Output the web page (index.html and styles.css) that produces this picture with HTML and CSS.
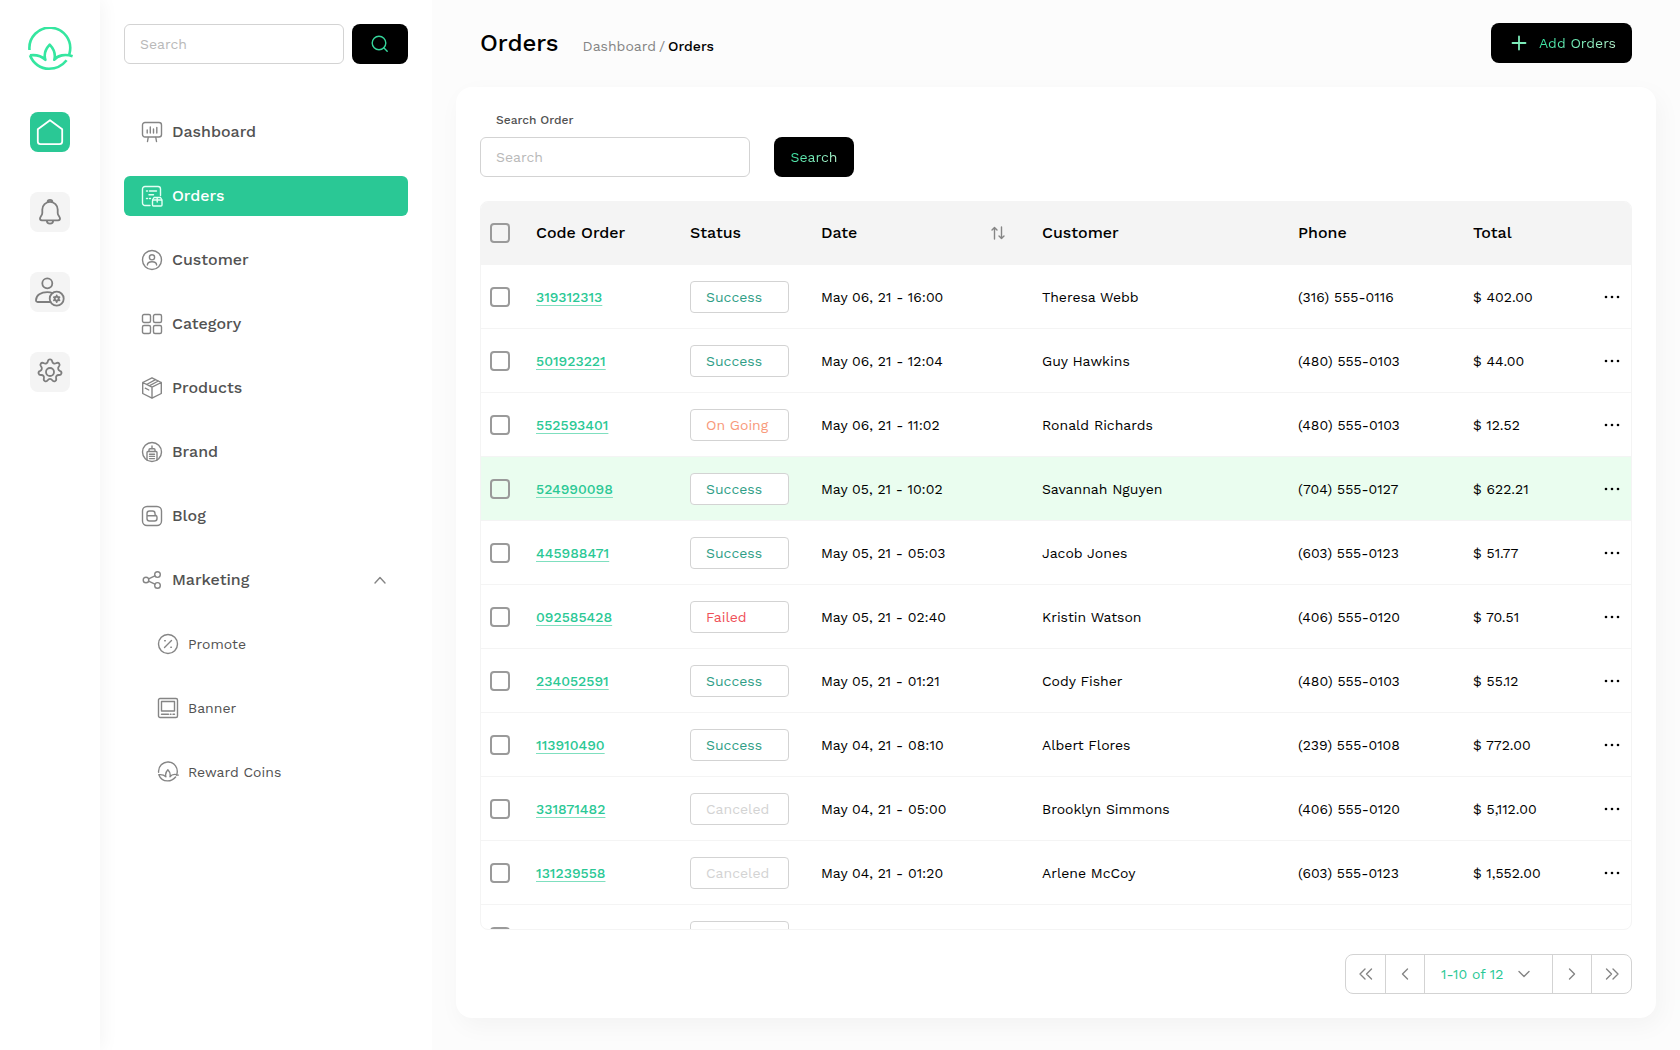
FILE: index.html
```
<!DOCTYPE html>
<html lang="en">
<head>
    <meta charset="UTF-8">
    <meta name="viewport" content="width=device-width, initial-scale=1.0">
    <title>Orders</title>
    <link rel="stylesheet" href="styles.css">
</head>
<body>
    <!-- Shared icons -->
    <svg class="defs" aria-hidden="true">
        <symbol id="leaf" viewBox="-2 0 48 45">
            <path d="M1.5 23A20.4 20.4 0 1 1 41.6 26L41 29.5M2 28.3C8 27.6 13.5 29 17.4 32.8C15.4 26.5 18 21.5 21.7 17.6C25.4 21.5 28 26.5 26.3 32.8C29.5 28.4 37 26.6 44.6 29.3M2 28.3C5 36.5 12.5 41.8 21 41.8C28.5 41.8 34 39 38.6 33.3"/>
        </symbol>
        <symbol id="dots" viewBox="0 0 16 4">
            <circle cx="2" cy="2" r="1.3"/><circle cx="8" cy="2" r="1.3"/><circle cx="14" cy="2" r="1.3"/>
        </symbol>
    </svg>

    <div class="app">
        <nav class="rail" aria-label="Shortcuts">
            <a href="#" class="logo" aria-label="Home page"><svg width="48" height="45"><use href="#leaf"/></svg></a>
            <a href="#" class="rail-button active" aria-label="Home">
                <svg width="28" height="28" viewBox="0 0 28 28"><path d="M1.8 11.2 14 2.200l12.200 9v12.300a2.700 2.700 0 0 1-2.700 2.700h-19a2.700 2.700 0 0 1-2.700-2.700z"/></svg>
            </a>
            <a href="#" class="rail-button" aria-label="Notifications">
                <svg width="28" height="28" viewBox="0 0 28 28"><path d="M11.6 4.300a2.400 2.400 0 0 1 4.800 0M6.300 11.500a7.700 7.700 0 0 1 15.400 0v3.500c0 2.600 2.300 3.300 2.300 5.600 0 1-.7 1.700-1.800 1.700H5.800c-1.100 0-1.800-.7-1.800-1.700C4 18.300 6.300 17.600 6.300 15zM10.800 22.500a3.200 3.200 0 0 0 6.400 0"/></svg>
            </a>
            <a href="#" class="rail-button" aria-label="Accounts">
                <svg width="30" height="30" viewBox="0 0 30 30"><circle cx="12.300" cy="6.300" r="5"/><path d="M15.600 25H2.600C1.500 25 1 24.300 1 23.200c0-5 5-8 11.300-8 2 0 3.800.3 5.300.8"/><circle cx="21.700" cy="21.700" r="7"/><circle cx="21.700" cy="21.700" r="2"/><path d="M21.700 18.500v1M21.700 24v1M18.900 20.100l.9.500M23.600 22.800l.9.500M18.900 23.300l.9-.5M23.600 20.600l.9-.5"/></svg>
            </a>
            <a href="#" class="rail-button" aria-label="Settings">
                <svg width="28" height="28" viewBox="0 0 28 28"><circle cx="14" cy="14" r="4"/><path d="M11.800 3.500C12 2 12.800 1.300 14 1.300s2 .7 2.200 2.200c.3 1.800 2.200 2.700 3.800 1.800 1.400-.8 2.500-.6 3.200.3s.6 2-.4 3.100c-1.200 1.400-.7 3.400 1 4.100 1.400.5 1.900 1.500 1.600 2.600s-1.200 1.700-2.600 1.600c-1.900-.1-3.200 1.500-2.700 3.300.4 1.400 0 2.400-1.100 2.900s-2.100.1-2.900-1.100c-1-1.600-3.200-1.600-4.200 0-.8 1.200-1.800 1.600-2.900 1.100s-1.500-1.500-1.100-2.900c.5-1.800-.8-3.400-2.700-3.300-1.400.1-2.300-.5-2.600-1.600s.2-2.100 1.600-2.600c1.700-.7 2.200-2.700 1-4.100-1-1.100-1.100-2.200-.4-3.100s1.800-1.100 3.200-.3c1.600.9 3.500 0 3.800-1.800z"/></svg>
            </a>
        </nav>

        <aside class="sidebar">
            <form class="side-search">
                <input type="search" class="field" placeholder="Search" aria-label="Search">
                <button type="button" class="button" aria-label="Search">
                    <svg class="search-icon" width="18" height="18" viewBox="0 0 18 18"><circle cx="8" cy="8" r="6.800"/><path d="m12.800 12.800 3.400 3.400"/></svg>
                </button>
            </form>

            <nav class="menu" aria-label="Main menu">
                <a href="#" class="menu-item">
                    <svg viewBox="0 0 22 22"><rect x="1.500" y="1.500" width="19" height="14.500" rx="2.500"/><path d="M6.200 9v3M9.300 6v6M12.500 8v4M15.800 6.500V12M7.200 16.500 6.500 20.500M14.800 16.500l.7 4"/></svg>
                    Dashboard
                </a>
                <a href="#" class="menu-item active">
                    <svg viewBox="0 0 22 22"><path d="M9 20.500H4A2.500 2.500 0 0 1 1.500 18V4A2.500 2.500 0 0 1 4 1.500h13A2.500 2.500 0 0 1 19.500 4v6.500M5.500 6h1M8.500 6h7M8 9.700h4.500M5.500 13.500h1M8.500 13.500h1"/><rect x="11.500" y="15" width="9.500" height="6" rx="1"/><path d="m11.500 15 1.500-2.500h6.500L21 15M16.200 12.500V17"/></svg>
                    Orders
                </a>
                <a href="#" class="menu-item">
                    <svg viewBox="0 0 22 22"><circle cx="11" cy="11" r="9.500"/><circle cx="11" cy="8.300" r="2.600"/><path d="M6.400 16c0-2.300 1.800-3.300 4.600-3.300s4.600 1 4.600 3.300"/></svg>
                    Customer
                </a>
                <a href="#" class="menu-item">
                    <svg viewBox="0 0 22 22"><rect x="1.500" y="1.500" width="8" height="8" rx="1.500"/><rect x="12.500" y="1.500" width="8" height="8" rx="1.500"/><rect x="1.500" y="12.500" width="8" height="8" rx="1.500"/><rect x="12.500" y="12.500" width="8" height="8" rx="1.500"/></svg>
                    Category
                </a>
                <a href="#" class="menu-item">
                    <svg viewBox="0 0 22 22"><path d="M11 .8 20.300 5.500v11L11 21.200 1.700 16.500v-11zM1.700 5.500 11 10.200l9.300-4.700M11 10.200v11M5.600 7.500 14.500 2.600M8.200 8.800 17.300 4M4.300 11.200l3.500 1.800"/></svg>
                    Products
                </a>
                <a href="#" class="menu-item">
                    <svg viewBox="0 0 22 22"><circle cx="11" cy="11" r="9.500"/><path d="M6 19v-7.500a1 1 0 0 1 1-1h8a1 1 0 0 1 1 1V19M8 10.500V8.800a1 1 0 0 1 1-1h4a1 1 0 0 1 1 1v1.700M11 5v2.500M8.500 13.200h5M8.500 15.400h5M8.500 17.600h5"/></svg>
                    Brand
                </a>
                <a href="#" class="menu-item">
                    <svg viewBox="0 0 22 22"><rect x="1.500" y="1.500" width="19" height="19" rx="4.500"/><path d="M6 8.500A2.500 2.500 0 0 1 8.500 6h3a2.500 2.500 0 0 1 2.500 2.500v.8c0 .7.500 1 1 1.200.7.300 1 .9 1 1.700v1.300a2.500 2.500 0 0 1-2.500 2.500h-5A2.500 2.500 0 0 1 6 13.500zM6 10.700h9"/></svg>
                    Blog
                </a>
                <a href="#" class="menu-item" aria-expanded="true">
                    <svg viewBox="0 0 22 22"><circle cx="5" cy="11" r="2.800"/><circle cx="16.500" cy="5.600" r="2.800"/><circle cx="16.500" cy="16.400" r="2.800"/><path d="m7.600 9.900 6.300-3.100M7.600 12.100l6.300 3.100"/></svg>
                    Marketing
                    <svg class="chevron" viewBox="0 0 12 12"><path d="m1 9 5-5.500L11 9"/></svg>
                </a>
                <a href="#" class="menu-item sub">
                    <svg viewBox="0 0 22 22"><circle cx="11" cy="11" r="9.500"/><path d="m7.500 14.500 7-7M7.700 7.800h.6M13.800 14.200h.6"/></svg>
                    Promote
                </a>
                <a href="#" class="menu-item sub">
                    <svg viewBox="0 0 22 22"><rect x="1.500" y="1.500" width="19" height="19" rx="1.500"/><rect x="4.500" y="4.500" width="13" height="9.500"/><path d="M4.500 17.200h7M13.300 17.200h.7M16 17.200h1.500"/></svg>
                    Banner
                </a>
                <a href="#" class="menu-item sub">
                    <svg class="leaf-small"><use href="#leaf"/></svg>
                    Reward Coins
                </a>
            </nav>
        </aside>

        <main class="main">
            <header class="topbar">
                <h1>Orders</h1>
                <nav class="breadcrumb" aria-label="Breadcrumb"><a href="#">Dashboard</a><span>/</span><strong>Orders</strong></nav>
                <button type="button" class="button add-button">
                    <svg width="24" height="24" viewBox="0 0 24 24"><path d="M12 5.500v13M5.500 12h13"/></svg>
                    <span class="shine">Add Orders</span>
                </button>
            </header>

            <section class="card">
                <form class="filter">
                    <div class="filter-field">
                        <label for="order-search">Search Order</label>
                        <input type="search" id="order-search" class="field" placeholder="Search">
                    </div>
                    <button type="button" class="button"><span class="shine">Search</span></button>
                </form>

                <div class="table-box">
                    <table>
                        <colgroup>
                            <col class="col-check"><col class="col-code"><col class="col-status"><col class="col-date">
                            <col><col class="col-phone"><col class="col-total"><col class="col-more">
                        </colgroup>
                        <thead>
                            <tr>
                                <th><input type="checkbox" aria-label="Select all orders"></th>
                                <th>Code Order</th>
                                <th>Status</th>
                                <th>
                                    <div class="sortable">Date
                                        <button type="button" class="icon-button" aria-label="Sort by date">
                                            <svg width="14" height="14" viewBox="0 0 14 14"><path d="M3.500 13V1.500M1 4l2.500-2.500L6 4M10.500 1v11.500M8 10l2.500 2.500L13 10"/></svg>
                                        </button>
                                    </div>
                                </th>
                                <th>Customer</th>
                                <th>Phone</th>
                                <th>Total</th>
                                <th></th>
                            </tr>
                        </thead>
                        <tbody>
                            <tr>
                                <td><input type="checkbox" aria-label="Select order 319312313"></td>
                                <td><a href="#">319312313</a></td>
                                <td><span class="status success">Success</span></td>
                                <td>May 06, 21 - 16:00</td>
                                <td>Theresa Webb</td>
                                <td>(316) 555-0116</td>
                                <td>$ 402.00</td>
                                <td><button type="button" class="icon-button more" aria-label="More"><svg width="16" height="4"><use href="#dots"/></svg></button></td>
                            </tr>
                            <tr>
                                <td><input type="checkbox" aria-label="Select order 501923221"></td>
                                <td><a href="#">501923221</a></td>
                                <td><span class="status success">Success</span></td>
                                <td>May 06, 21 - 12:04</td>
                                <td>Guy Hawkins</td>
                                <td>(480) 555-0103</td>
                                <td>$ 44.00</td>
                                <td><button type="button" class="icon-button more" aria-label="More"><svg width="16" height="4"><use href="#dots"/></svg></button></td>
                            </tr>
                            <tr>
                                <td><input type="checkbox" aria-label="Select order 552593401"></td>
                                <td><a href="#">552593401</a></td>
                                <td><span class="status ongoing">On Going</span></td>
                                <td>May 06, 21 - 11:02</td>
                                <td>Ronald Richards</td>
                                <td>(480) 555-0103</td>
                                <td>$ 12.52</td>
                                <td><button type="button" class="icon-button more" aria-label="More"><svg width="16" height="4"><use href="#dots"/></svg></button></td>
                            </tr>
                            <tr class="highlight">
                                <td><input type="checkbox" aria-label="Select order 524990098"></td>
                                <td><a href="#">524990098</a></td>
                                <td><span class="status success">Success</span></td>
                                <td>May 05, 21 - 10:02</td>
                                <td>Savannah Nguyen</td>
                                <td>(704) 555-0127</td>
                                <td>$ 622.21</td>
                                <td><button type="button" class="icon-button more" aria-label="More"><svg width="16" height="4"><use href="#dots"/></svg></button></td>
                            </tr>
                            <tr>
                                <td><input type="checkbox" aria-label="Select order 445988471"></td>
                                <td><a href="#">445988471</a></td>
                                <td><span class="status success">Success</span></td>
                                <td>May 05, 21 - 05:03</td>
                                <td>Jacob Jones</td>
                                <td>(603) 555-0123</td>
                                <td>$ 51.77</td>
                                <td><button type="button" class="icon-button more" aria-label="More"><svg width="16" height="4"><use href="#dots"/></svg></button></td>
                            </tr>
                            <tr>
                                <td><input type="checkbox" aria-label="Select order 092585428"></td>
                                <td><a href="#">092585428</a></td>
                                <td><span class="status failed">Failed</span></td>
                                <td>May 05, 21 - 02:40</td>
                                <td>Kristin Watson</td>
                                <td>(406) 555-0120</td>
                                <td>$ 70.51</td>
                                <td><button type="button" class="icon-button more" aria-label="More"><svg width="16" height="4"><use href="#dots"/></svg></button></td>
                            </tr>
                            <tr>
                                <td><input type="checkbox" aria-label="Select order 234052591"></td>
                                <td><a href="#">234052591</a></td>
                                <td><span class="status success">Success</span></td>
                                <td>May 05, 21 - 01:21</td>
                                <td>Cody Fisher</td>
                                <td>(480) 555-0103</td>
                                <td>$ 55.12</td>
                                <td><button type="button" class="icon-button more" aria-label="More"><svg width="16" height="4"><use href="#dots"/></svg></button></td>
                            </tr>
                            <tr>
                                <td><input type="checkbox" aria-label="Select order 113910490"></td>
                                <td><a href="#">113910490</a></td>
                                <td><span class="status success">Success</span></td>
                                <td>May 04, 21 - 08:10</td>
                                <td>Albert Flores</td>
                                <td>(239) 555-0108</td>
                                <td>$ 772.00</td>
                                <td><button type="button" class="icon-button more" aria-label="More"><svg width="16" height="4"><use href="#dots"/></svg></button></td>
                            </tr>
                            <tr>
                                <td><input type="checkbox" aria-label="Select order 331871482"></td>
                                <td><a href="#">331871482</a></td>
                                <td><span class="status canceled">Canceled</span></td>
                                <td>May 04, 21 - 05:00</td>
                                <td>Brooklyn Simmons</td>
                                <td>(406) 555-0120</td>
                                <td>$ 5,112.00</td>
                                <td><button type="button" class="icon-button more" aria-label="More"><svg width="16" height="4"><use href="#dots"/></svg></button></td>
                            </tr>
                            <tr>
                                <td><input type="checkbox" aria-label="Select order 131239558"></td>
                                <td><a href="#">131239558</a></td>
                                <td><span class="status canceled">Canceled</span></td>
                                <td>May 04, 21 - 01:20</td>
                                <td>Arlene McCoy</td>
                                <td>(603) 555-0123</td>
                                <td>$ 1,552.00</td>
                                <td><button type="button" class="icon-button more" aria-label="More"><svg width="16" height="4"><use href="#dots"/></svg></button></td>
                            </tr>
                            <tr>
                                <td><input type="checkbox" aria-label="Select order"></td>
                                <td></td>
                                <td><span class="status"></span></td>
                                <td></td>
                                <td></td>
                                <td></td>
                                <td></td>
                                <td></td>
                            </tr>
                        </tbody>
                    </table>
                </div>

                <div class="pagination">
                    <button type="button" aria-label="First page"><svg width="14" height="12" viewBox="0 0 14 12"><path d="M6 1 1 6l5 5M12.500 1l-5 5 5 5"/></svg></button>
                    <button type="button" aria-label="Previous page"><svg width="14" height="12" viewBox="0 0 14 12"><path d="M9.500 1l-5 5 5 5"/></svg></button>
                    <div class="page-range">
                        <select aria-label="Page">
                            <option>1-10 of 12</option>
                        </select>
                        <svg width="12" height="12" viewBox="0 0 12 12"><path d="m1 3.500 5 5 5-5"/></svg>
                    </div>
                    <button type="button" aria-label="Next page"><svg width="14" height="12" viewBox="0 0 14 12"><path d="m4.500 1 5 5-5 5"/></svg></button>
                    <button type="button" aria-label="Last page"><svg width="14" height="12" viewBox="0 0 14 12"><path d="m1.500 1 5 5-5 5M8 1l5 5-5 5"/></svg></button>
                </div>
            </section>
        </main>
    </div>
</body>
</html>
```
FILE: styles.css
```
* {
    box-sizing: border-box;
}
body {
    margin: 0;
    font-family: "Work Sans", Inter, sans-serif;
    font-size: 14px;
    line-height: 20px;
    color: #000;
    background: #fcfcfc;
}
a {
    color: inherit;
    text-decoration: none;
}
button, input, select {
    font: inherit;
    margin: 0;
}
button {
    cursor: pointer;
}
svg {
    display: block;
    flex: none;
    fill: none;
    stroke: currentColor;
    stroke-width: 1.4;
    stroke-linecap: round;
    stroke-linejoin: round;
}
.defs {
    position: absolute;
    width: 0;
    height: 0;
}
.app {
    display: flex;
    height: 100vh;
}

/* Icon rail */
.rail {
    flex: none;
    width: 100px;
    display: flex;
    flex-direction: column;
    align-items: center;
    gap: 40px;
    padding-top: 27px;
    background: #fff;
    box-shadow: 4px 0 16px rgba(0, 0, 0, 0.04);
    z-index: 1;
}
.logo {
    color: #35e6a0;
}
.logo svg {
    stroke-width: 2.6;
    stroke-linecap: butt;
}
.rail-button {
    display: grid;
    place-items: center;
    width: 40px;
    height: 40px;
    border-radius: 8px;
    background: #f4f4f4;
    color: #7e7e7e;
}
.rail-button svg {
    stroke-width: 1.8;
}
.rail-button.active {
    background: #2ac895;
    color: #fff;
}

/* Sidebar */
.sidebar {
    flex: none;
    width: 332px;
    padding: 24px;
    background: #fff;
}
.side-search {
    display: flex;
    gap: 8px;
}
.side-search .field {
    flex: 1;
    min-width: 0;
}
.side-search .button {
    width: 56px;
    min-width: 0;
    padding: 0;
}
.field {
    width: 100%;
    height: 40px;
    padding: 0 15px;
    border: 1px solid #d3d3d3;
    border-radius: 6px;
    background: #fff;
    outline: none;
}
.field::placeholder {
    color: #b9b9b9;
}
.button {
    display: flex;
    align-items: center;
    justify-content: center;
    min-width: 80px;
    height: 40px;
    padding: 0 16px;
    border: 0;
    border-radius: 8px;
    background: #000;
    color: #35d69c;
}
.shine {
    background: linear-gradient(135deg, #25e09a, #c4f5d3);
    background-clip: text;
    color: transparent;
}
.menu {
    display: flex;
    flex-direction: column;
    gap: 24px;
    margin-top: 48px;
}
.menu-item {
    display: flex;
    align-items: center;
    gap: 9px;
    height: 40px;
    padding: 0 22px 0 17px;
    border-radius: 6px;
    font-size: 16px;
    font-weight: 500;
    color: #525252;
}
.menu-item svg {
    width: 22px;
    height: 22px;
    color: #858585;
}
.menu-item .chevron {
    width: 12px;
    height: 12px;
    margin-left: auto;
}
.menu-item.active {
    background: #2ac895;
    color: #fff;
}
.menu-item.active svg {
    color: #e4fff4;
}
.menu-item.sub {
    padding-left: 33px;
    font-size: 14px;
    font-weight: 400;
}
.menu-item .leaf-small {
    stroke-width: 3;
}

/* Content */
.main {
    flex: 1;
    min-width: 0;
    display: flex;
    flex-direction: column;
    padding: 23px 24px 32px;
}
.topbar {
    display: flex;
    align-items: center;
    gap: 24px;
    padding: 0 24px;
    margin-bottom: 24px;
}
h1 {
    margin: 0;
    font-size: 24px;
    line-height: 32px;
    font-weight: 500;
}
.breadcrumb {
    display: flex;
    gap: 3px;
    padding-top: 6px;
    color: #858585;
}
.breadcrumb strong {
    color: #000;
    font-weight: 500;
}
.add-button {
    gap: 8px;
    margin-left: auto;
}
.add-button svg {
    color: #7cebb9;
    stroke-width: 1.8;
}
.card {
    flex: 1;
    min-height: 0;
    display: flex;
    flex-direction: column;
    gap: 24px;
    padding: 24px;
    border-radius: 16px;
    background: #fff;
    box-shadow: 4px 8px 24px rgba(0, 0, 0, 0.04);
}
.filter {
    display: flex;
    align-items: flex-end;
    gap: 24px;
}
.filter-field {
    width: 270px;
}
.filter-field label {
    display: block;
    padding-left: 16px;
    margin-bottom: 8px;
    font-size: 12px;
    line-height: 18px;
    font-weight: 500;
    color: #525252;
}

/* Orders table */
.table-box {
    flex: 1;
    min-height: 0;
    overflow: hidden;
    border: 1px solid #f4f4f4;
    border-radius: 8px;
}
table {
    width: 100%;
    table-layout: fixed;
    border-collapse: separate;
    border-spacing: 0;
}
.col-check { width: 55px; }
.col-code { width: 154px; }
.col-status { width: 131px; }
.col-date { width: 221px; }
.col-phone { width: 175px; }
.col-total { width: 131px; }
.col-more { width: 27px; }
th, td {
    height: 64px;
    padding: 0;
    text-align: left;
    vertical-align: middle;
    border-bottom: 1px solid #f4f4f4;
}
th {
    height: 63px;
    background: #f4f4f4;
    font-size: 16px;
    font-weight: 500;
}
th:first-child, td:first-child {
    padding-left: 9px;
}
td a {
    font-weight: 500;
    color: #2ac895;
    text-decoration: underline;
    text-decoration-color: #7fdfbf;
    text-decoration-thickness: 1px;
    text-underline-offset: 3px;
}
.highlight td {
    background: #eafdef;
}
input[type="checkbox"] {
    display: block;
    appearance: none;
    width: 20px;
    height: 20px;
    border: 2px solid #9a9a9a;
    border-radius: 4px;
}
.sortable {
    display: flex;
    align-items: center;
    justify-content: space-between;
    padding-right: 37px;
}
.icon-button {
    display: block;
    padding: 0;
    border: 0;
    background: none;
    color: #858585;
}
.more {
    color: #000;
}
.more svg {
    fill: currentColor;
    stroke: none;
}
.status {
    display: block;
    width: 99px;
    height: 32px;
    padding: 0 15px;
    line-height: 30px;
    border: 1px solid #d3d3d3;
    border-radius: 4px;
    background: #fff;
}
.success { color: #2f9e86; }
.ongoing { color: #f8997a; }
.failed { color: #ef5058; }
.canceled { color: #d3d3d3; }

/* Pagination */
.pagination {
    display: flex;
    align-self: flex-end;
    height: 40px;
    border: 1px solid #d3d3d3;
    border-radius: 8px;
}
.pagination > * + * {
    border-left: 1px solid #d3d3d3;
}
.pagination button {
    display: grid;
    place-items: center;
    width: 39px;
    padding: 0;
    border-width: 0;
    background: none;
    color: #858585;
}
.pagination button + button, .page-range + button {
    border-left-width: 1px;
}
.pagination button:last-child {
    width: 40px;
}
.page-range {
    display: grid;
    align-items: center;
    width: 128px;
    color: #858585;
}
.page-range select, .page-range svg {
    grid-area: 1 / 1;
}
.page-range select {
    height: 100%;
    padding: 0 16px;
    appearance: none;
    border: 0;
    background: none;
    color: #2ac895;
}
.page-range svg {
    justify-self: end;
    margin-right: 22px;
    pointer-events: none;
}
```
